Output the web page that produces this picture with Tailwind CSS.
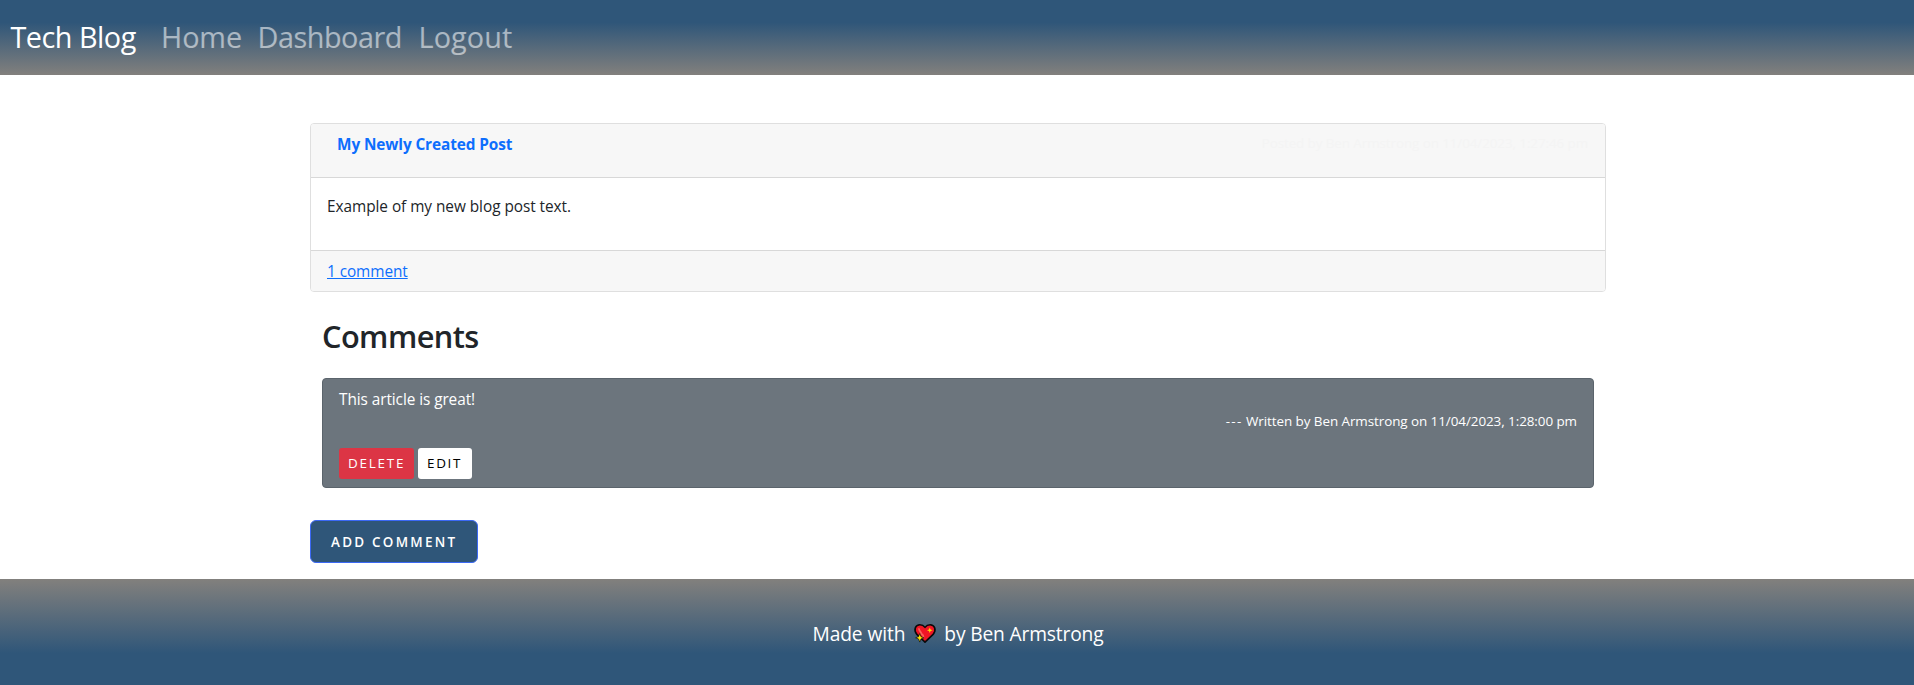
<!DOCTYPE html>
<html lang="en">
<head>
<meta charset="utf-8">
<title>Tech Blog</title>
<script src="https://cdn.jsdelivr.net/npm/@tailwindcss/browser@4"></script>
</head>
<body class="flex h-[685px] flex-col overflow-hidden bg-white font-['Open_Sans',sans-serif] text-[15.36px] leading-6 text-[#212529]">
  <nav class="flex h-[75px] shrink-0 items-center bg-[linear-gradient(#2f5679_30%,#82807d)] pb-0.5 pl-[10.5px] text-[28.8px] whitespace-nowrap text-white/55">
    <a class="w-[150.5px] tracking-[-0.5px] text-white">Tech Blog</a>
    <a class="w-[96.5px] tracking-[-0.1px]">Home</a>
    <a class="w-[161px] tracking-[-0.47px]">Dashboard</a>
    <a class="tracking-[0.1px]">Logout</a>
  </nav>
  <main class="mx-auto flex h-[504px] w-[1296px] shrink-0 translate-x-px flex-col items-start pt-12">
    <article class="flex h-[169px] w-full shrink-0 flex-col overflow-hidden rounded border border-[#dfdfdf]">
      <header class="flex h-[54px] items-start justify-between border-b border-[#d8d8d8] bg-[#f7f7f7] pt-[9px] pr-[17px] pl-[26px]">
        <a class="font-bold tracking-[-0.1px] text-[#0d6efd]">My Newly Created Post</a>
        <span class="text-[13.44px] leading-[20px] tracking-[-0.095px] text-[#f4f4f4]">Posted by Ben Armstrong on 11/04/2023, 1:27:46 pm</span>
      </header>
      <div class="h-[73px] border-b border-[#d8d8d8] px-4 pt-[17px]">
        <p class="tracking-[-0.04px]">Example of my new blog post text.</p>
      </div>
      <footer class="flex-1 bg-[#f7f7f7] px-4 pt-[9px]">
        <a class="tracking-[-0.07px] text-[#0d6efd] underline decoration-1 underline-offset-1">1 comment</a>
      </footer>
    </article>
    <section class="w-full px-3 pt-[25px]">
      <h2 class="text-[30.72px] leading-[38px] font-[550] tracking-[-0.55px]">Comments</h2>
      <div class="mt-[23px] h-[110px] rounded border border-[#5b646c] bg-[#6c757d] px-4 pt-[9px] text-white">
        <p class="tracking-[-0.07px]">This article is great!</p>
        <p class="text-right text-[13.44px] leading-[19px] tracking-[-0.07px]"><span class="tracking-[1.3px]">---</span> Written by Ben Armstrong on 11/04/2023, 1:28:00 pm</p>
        <div class="mt-[17px] flex gap-1 text-[13.44px] leading-[31px]">
          <button class="h-[31px] w-[75px] rounded-[3px] bg-[#dc3545] pl-[9px] text-left tracking-[1.78px]">DELETE</button>
          <button class="h-[31px] w-[54px] rounded-[3px] bg-white pl-[9px] text-left tracking-[1.68px] text-black">EDIT</button>
        </div>
      </div>
    </section>
    <button class="mt-8 h-[43px] w-[168px] shrink-0 rounded-md border border-[#3c69f5] bg-[#2f5679] pl-5 text-left text-[13.44px] font-semibold tracking-[2.25px] text-white">ADD COMMENT</button>
  </main>
  <footer class="flex h-[106px] shrink-0 items-center justify-center bg-[linear-gradient(#82807d,#2f5679_70%)] pt-[3px] pl-[2px] text-[19.2px] whitespace-nowrap text-white">
    <span class="tracking-[-0.1px]">Made with</span>
    <svg class="mr-[7px] ml-[8px] h-[21px] w-[24px]" viewBox="0 0 24 22">
      <path d="M12 20 3.500 12C-.5 7 2.200 1.800 6.600 1.800c2.200 0 4 .9 5.400 2.800 1.400-1.900 3.200-2.800 5.400-2.800 4.400 0 7.100 5.200 3.100 10.200Z" fill="#f01525" stroke="#0a0a0a" stroke-width="1.700" stroke-linejoin="round"/>
      <path d="M5.800 5.500c-.8 3 2.600 3.300 2.200 5.800 1.600.7 2.600 2 2.200 4" fill="none" stroke="#f9615c" stroke-width="1.800"/>
      <path d="m17 4.600.8 2.200 2.200.8-2.200.8-.8 2.200-.8-2.200-2.200-.8 2.200-.8Z" fill="#ffe100"/>
      <path d="m6.500 11 1.300 3.300 3 1.200-3 1.200L6.500 20l-1.300-3.300-3-1.200 3-1.200Z" fill="#ffe100" stroke="#0a0a0a" stroke-width=".7"/>
    </svg>
    <span class="tracking-[-0.15px]">by Ben Armstrong</span>
  </footer>
</body>
</html>
